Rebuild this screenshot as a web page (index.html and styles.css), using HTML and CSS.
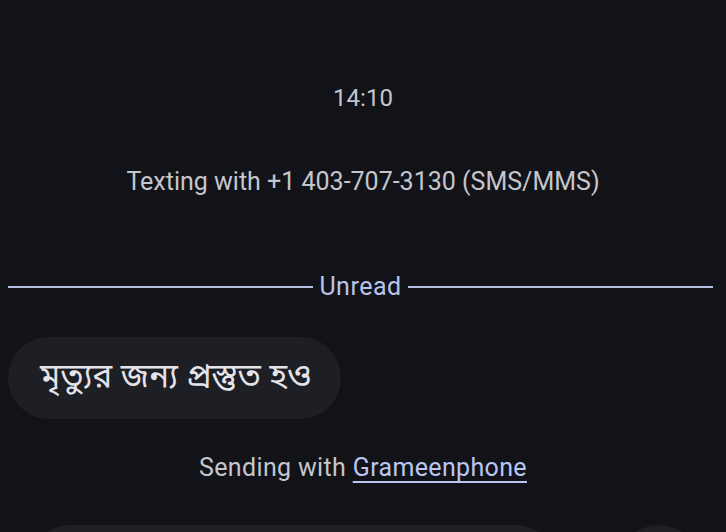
FILE: index.html
```html
<!DOCTYPE html>
<html lang="bn">
<head>
<meta charset="utf-8">
<link rel="stylesheet" href="styles.css">
</head>
<body>
<div class="screen">
  <div class="time">14:10</div>
  <div class="texting">Texting with +1 403-707-3130 (SMS/MMS)</div>
  <div class="divider"><span class="line"></span><span class="label">Unread</span><span class="line"></span></div>
  <div class="row"><div class="bubble">মৃত্যুর জন্য প্রস্তুত হও</div></div>
  <div class="sending">Sending with <a class="link">Grameenphone</a></div>
  <div class="compose"><div class="field"></div><div class="circle"></div></div>
</div>
</body>
</html>
```
FILE: styles.css
```css
html, body { margin: 0; padding: 0; background: #121318; }
body { width: 726px; height: 532px; overflow: hidden; font-family: Roboto, "Noto Sans", "Noto Sans Bengali", sans-serif; }
.screen { display: flex; flex-direction: column; padding-top: 82px; height: 532px; box-sizing: border-box; overflow: hidden; }
.time { text-align: center; color: #c5c6cd; font-size: 24px; line-height: 32px; }
.texting { text-align: center; color: #c5c6cd; font-size: 25px; line-height: 32px; margin-top: 52px; }
.divider { display: flex; align-items: center; gap: 6px; padding: 0 13px 0 8px; margin-top: 73px; }
.line { flex: 1; height: 2px; background: #b3c0e4; }
.label { color: #b8c4ea; font-size: 25px; letter-spacing: 0.5px; line-height: 32px; }
.row { display: flex; padding: 0 8px; margin-top: 34px; }
.bubble { background: #1e1f24; border-radius: 41px; height: 82px; padding: 0 30px 0 32px; display: flex; align-items: center; color: #e4e4ea; font-size: 33px; font-family: "Noto Sans Bengali", "Noto Sans", sans-serif; }
.sending { text-align: center; color: #c5c6cd; font-size: 25px; letter-spacing: 0.35px; line-height: 32px; margin-top: 33px; }
.link { color: #b9c6f2; text-decoration: underline; text-underline-offset: 5px; text-decoration-thickness: 1.5px; }
.compose { display: flex; align-items: flex-start; padding: 0 26px 0 30px; margin-top: 41px; gap: 62px; flex-shrink: 0; }
.field { flex: 1; height: 80px; border-radius: 40px; background: #1f2025; }
.circle { width: 82px; height: 82px; border-radius: 50%; background: #1f2025; }
```
